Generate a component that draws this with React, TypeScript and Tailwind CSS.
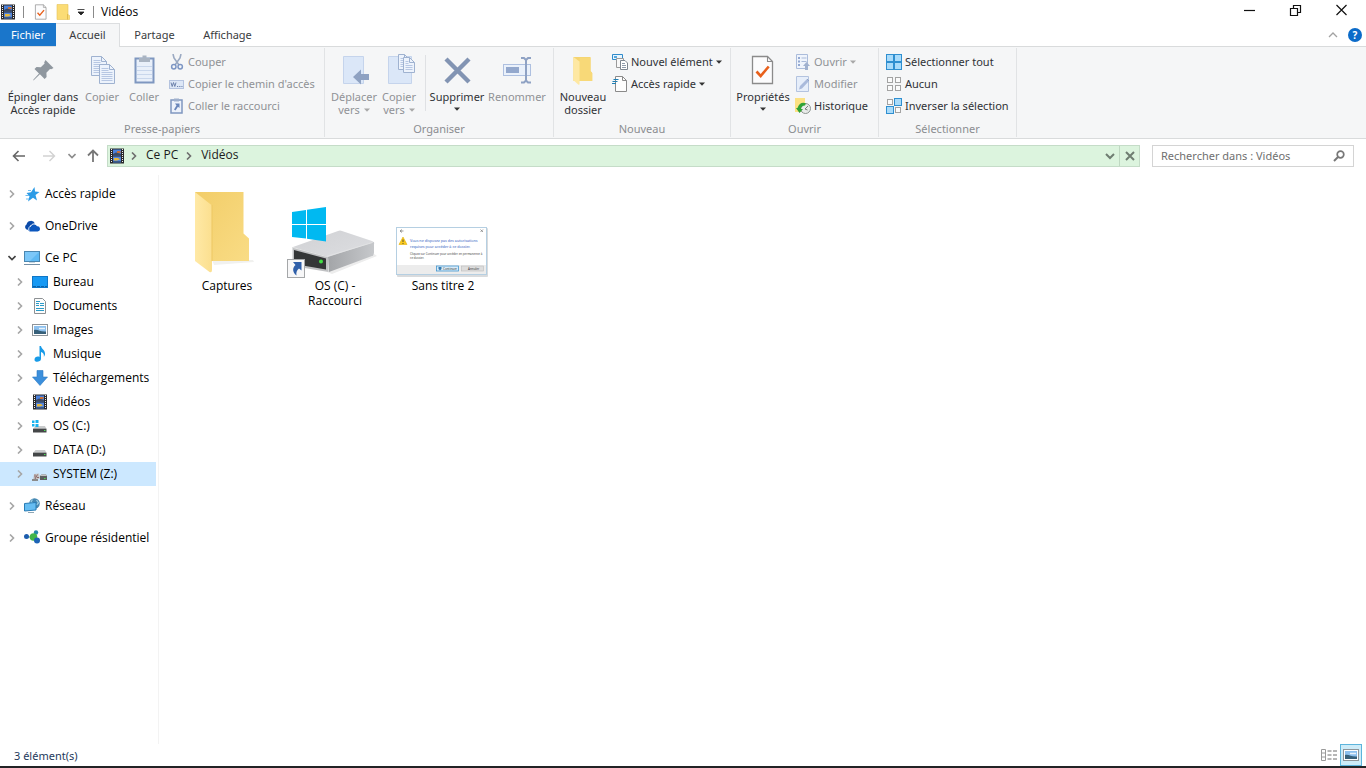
import React from "react";

type IconProps = { className?: string };

const Film = ({ className = "size-4" }: IconProps) => (
  <svg viewBox="0 0 16 16" className={className} aria-hidden="true">
    <rect x="1" y="0.5" width="14" height="15" fill="#2a2a2c" />
    <rect x="4" y="1.5" width="8" height="6" fill="#4b82dd" />
    <rect x="4" y="8.5" width="8" height="6" fill="#5587dc" />
    <path d="M4 6 7 4.5l5 1.5v1.5H4z" fill="#3c4a63" />
    <path d="M8 3h3.5v2H8z" fill="#c9713a" />
    <path d="M5 10h4l2 1.5-3 1H5z" fill="#e6b83c" />
    <path d="M4 13.2h8v1.3H4z" fill="#34507a" />
    <path d="M2.5 1v14M13.5 1v14" stroke="#f0f0f0" strokeWidth="1" strokeDasharray="1 1" />
  </svg>
);

const CheckDoc = ({ className }: IconProps) => (
  <svg viewBox="0 0 24 30" className={className} aria-hidden="true">
    <path d="M1.5 1.5h15l5 5v22h-20z" fill="#fcfcfd" stroke="#8b8b8b" strokeWidth="1.3" />
    <path d="M16.5 1.5v5h5" fill="none" stroke="#8b8b8b" strokeWidth="1.1" />
    <path d="m5.500 16.500 4.200 4.500 8-9.500" fill="none" stroke="#e8601c" strokeWidth="2.6" />
  </svg>
);

const Folder = ({ className }: IconProps) => (
  <svg viewBox="0 0 56 82" className={className} aria-hidden="true">
    <path d="M0 0h50v41l5 6v23H0z" fill="#f5d470" />
    <path d="M18 2h32v39l5 6v23H18z" fill="#f8d978" />
    <path d="M0 0l18 13v66q0 3-3 2L0 68z" fill="#fee8a2" />
  </svg>
);

const Pin = () => (
  <svg viewBox="0 0 24 24" className="mt-1 size-6" aria-hidden="true">
    <path d="M14.5 2 22.5 10l-2.300 1.300-1.200-.3-3.600 3.800.2 4.200-2 2-4.700-4.700L3 22l-1 .5.5-1L8 15.500 3.500 11l2-2 4.300.2 3.800-3.600-.4-1.200z" fill="#8f979f" />
  </svg>
);

const PageLines = ({ x, y, w = 15, h = 19 }: { x: number; y: number; w?: number; h?: number }) => (
  <g transform={`translate(${x} ${y})`}>
    <path d={`M0 0h${w - 5}l5 5v${h - 5}H0z`} fill="#edf3fc" stroke="#9fb2d0" />
    <path d={`M${w - 5} 0v5h5`} fill="none" stroke="#9fb2d0" />
    <path d={`M2 4h${w - 8}M2 6h${w - 8}M2 8h${w - 4}M2 10h${w - 4}M2 12h${w - 4}`} stroke="#b7c7e3" />
    {h > 16 && <path d={`M2 14h${w - 4}M2 16h${w - 4}`} stroke="#b7c7e3" />}
  </g>
);

const CopyIcon = () => (
  <svg viewBox="0 0 32 32" className="size-8" aria-hidden="true">
    <PageLines x={5.5} y={2.5} />
    <PageLines x={13.5} y={10.5} />
  </svg>
);

const PasteIcon = () => (
  <svg viewBox="0 0 32 32" className="size-8" aria-hidden="true">
    <rect x="7.5" y="4.5" width="18" height="24" fill="#e9f0fa" stroke="#7f97c0" strokeWidth="2" />
    <path d="M9 12.5h15M9 16.5h15M9 20.5h15M9 24.5h15" stroke="#c9d7ec" />
    <path d="M11 4h3.5V1.5h4V4H22v4H11z" fill="#a9b4c2" />
  </svg>
);

const Scissors = () => (
  <svg viewBox="0 0 16 16" className="size-4" aria-hidden="true">
    <path d="M4 0 5 4l5 7M12 0l-1 4-5 7" fill="none" stroke="#9aa9c2" strokeWidth="1.6" />
    <circle cx="4.8" cy="12.8" r="2.2" fill="none" stroke="#7d96c4" strokeWidth="1.5" />
    <circle cx="11.2" cy="12.8" r="2.2" fill="none" stroke="#7d96c4" strokeWidth="1.5" />
  </svg>
);

const PathIcon = () => (
  <svg viewBox="0 0 16 16" className="size-4" aria-hidden="true">
    <rect x="0.5" y="4.5" width="14" height="8" fill="#dde7f6" stroke="#b4c3df" />
    <path d="m2 6.5 1.200 4 1.300-4 1.300 4 1.200-4" fill="none" stroke="#6d82ac" />
    <path d="M8 10.5h5.5" stroke="#6d82ac" strokeDasharray="1.2 1" />
  </svg>
);

const PasteShortcut = () => (
  <svg viewBox="0 0 16 16" className="size-4" aria-hidden="true">
    <rect x="2" y="2" width="11" height="13" fill="#edf2fb" stroke="#7f97c0" strokeWidth="1.5" />
    <path d="M5 .5h5v3H5z" fill="#9fb0cc" />
    <path d="M6 5.5h4.5V10L9 8.700 6.500 12.500 5 11.500l2.500-4z" fill="#6a86ba" />
  </svg>
);

const MoveTo = () => (
  <svg viewBox="0 0 32 32" className="size-8" aria-hidden="true">
    <path d="M5.5 2.5h20v27h-20z" fill="#dbe7f8" stroke="#c5d4ec" />
    <path d="M15 23l8-7.5v4.5h8v6h-8v4.5z" fill="#8fa2c2" />
  </svg>
);

const CopyTo = () => (
  <svg viewBox="0 0 32 32" className="size-8" aria-hidden="true">
    <path d="M5.5 2.5h23v27h-23z" fill="#dbe7f8" stroke="#c5d4ec" />
    <PageLines x={15.5} y={0.5} w={11} h={15} />
    <PageLines x={20.5} y={3.5} w={11} h={15} />
  </svg>
);

const DeleteX = () => (
  <svg viewBox="0 0 32 32" className="size-8" aria-hidden="true">
    <path d="M5 5l23 23M28 5 5 28" stroke="#8294b3" strokeWidth="4.4" />
  </svg>
);

const Rename = () => (
  <svg viewBox="0 0 32 32" className="size-8" aria-hidden="true">
    <rect x="2.5" y="10.5" width="27" height="11" fill="#eaf1fb" stroke="#aec0e0" />
    <rect x="5" y="13" width="13" height="6" fill="#93a8cd" />
    <path d="M20 4h3l2 2 2-2h3M20 28.5h3l2-2 2 2h3M25 5.5V27" fill="none" stroke="#8fa2c4" strokeWidth="2" />
  </svg>
);

const NewItem = () => (
  <svg viewBox="0 0 16 16" className="size-4" aria-hidden="true">
    <path d="M.5.5h10v5H.5z" fill="#e8f4fd" stroke="#2e8bcb" />
    <path d="M2 2h3v2H2z" fill="#55a8dd" />
    <path d="M4.5 4.5h7v9h-7z" fill="#f8f8f8" stroke="#9a9a9a" />
    <path d="M8.5 6.5h4.5l2.5 2.5v6.5h-7z" fill="#fff" stroke="#7e8791" />
    <path d="M10 9.5h3M10 11.5h4M10 13.5h4" stroke="#8e9bab" />
  </svg>
);

const EasyAccess = () => (
  <svg viewBox="0 0 16 16" className="size-4" aria-hidden="true">
    <path d="M3.5.5h7l4 4v11h-11z" fill="#fdfdfd" stroke="#8a8a8a" />
    <path d="M10.5.5v4h4" fill="none" stroke="#8a8a8a" />
    <path d="M1.5 3.5h5M.5 5.5h5M0 7.5h4" stroke="#2080b5" strokeWidth="1.2" />
  </svg>
);

const OpenIcon = () => (
  <svg viewBox="0 0 16 16" className="size-4" aria-hidden="true">
    <path d="M1.5.5h11v14h-11z" fill="#eff4fc" stroke="#abbcdb" />
    <path d="M3 3h2v2H3zM3 6.5h2v2H3zM3 10h2v2H3z" fill="#93a9d2" />
    <path d="M6.5 4h5M6.5 7.5h5" stroke="#a9bad9" />
    <path d="m11.5 8 3.5 4h-2v4h-3v-4H8z" fill="#a0b1cf" />
  </svg>
);

const EditIcon = () => (
  <svg viewBox="0 0 16 16" className="size-4" aria-hidden="true">
    <path d="M1.5.5h12v15h-12z" fill="#e6eefa" stroke="#b3c3df" />
    <path d="M4 13.5 5 10l7-7 2 2-7 7.5z" fill="#a9badb" />
    <path d="M12 3l2 2" stroke="#90a3c7" />
  </svg>
);

const HistoryIcon = () => (
  <svg viewBox="0 0 16 16" className="size-4" aria-hidden="true">
    <path d="M0 0h10v7l2 1v6H0z" fill="#fbe183" />
    <circle cx="10.5" cy="10.5" r="5" fill="#e8ebe9" stroke="#8d9490" />
    <path d="M10 11l3-3M10 11l2.5 1" fill="none" stroke="#77807b" />
    <path d="M2.5 10C4 5 8 3.5 11 5.5L10 7.5C7.5 7.5 6.5 9 6 11h2l-3.5 4L1 10z" fill="#2fa336" />
  </svg>
);

const cells = [
  [0.5, 0.5],
  [8.5, 0.5],
  [0.5, 8.5],
  [8.5, 8.5],
];
const SelectAll = () => (
  <svg viewBox="0 0 16 16" className="size-4" aria-hidden="true">
    {cells.map(([x, y]) => (
      <rect key={`${x}-${y}`} x={x} y={y} width="7" height="7" fill="#a9dbfa" stroke="#2f8fd0" />
    ))}
  </svg>
);
const SelectSome = ({ inverse = false }: { inverse?: boolean }) => (
  <svg viewBox="0 0 16 16" className="size-4" aria-hidden="true">
    {cells.map(([x, y], i) =>
      inverse && (i === 1 || i === 2) ? (
        <rect key={i} x={x} y={y} width="7" height="7" fill="#a9dbfa" stroke="#2f8fd0" />
      ) : (
        <rect key={i} x={x + 1} y={y + 1} width="5" height="5" fill="#fbfbfb" stroke="#a3a3a3" />
      )
    )}
  </svg>
);

const Caret = ({ className = "text-[#333]" }: IconProps) => (
  <svg viewBox="0 0 6 4" className={`inline h-1 w-1.5 shrink-0 ${className}`} aria-hidden="true">
    <path d="M0 .5h6L3 3.8z" fill="currentColor" />
  </svg>
);

function Big({ icon, lines, width, disabled = false, caret }: { icon: React.ReactNode; lines: string[]; width: string; disabled?: boolean; caret?: "inline" | "below" }) {
  return (
    <button type="button" disabled={disabled} className={`flex shrink-0 flex-col items-center pt-[3px] text-center leading-[13px] ${width} ${disabled ? "text-[#909296]" : "text-[#303236]"}`}>
      <span className="flex h-9 items-start justify-center">{icon}</span>
      {lines.map((line, i) => (
        <span key={line} className="flex items-center gap-1 whitespace-nowrap">
          {line}
          {caret === "inline" && i === lines.length - 1 && <Caret className="text-[#a8a8a8]" />}
        </span>
      ))}
      {caret === "below" && (
        <span className="flex h-3 items-center">
          <Caret />
        </span>
      )}
    </button>
  );
}

function Small({ icon, label, disabled = false, caret = false }: { icon: React.ReactNode; label: string; disabled?: boolean; caret?: boolean }) {
  return (
    <button type="button" disabled={disabled} className={`flex h-[22px] items-center gap-[3px] whitespace-nowrap ${disabled ? "text-[#909296]" : "text-[#303236]"}`}>
      {icon}
      <span>{label}</span>
      {caret && <Caret className={disabled ? "text-[#a8a8a8]" : "text-[#333]"} />}
    </button>
  );
}

function Group({ label, width, children }: { label: string; width: string; children: React.ReactNode }) {
  return (
    <section aria-label={label} className={`my-px flex shrink-0 flex-col border-r border-[#e1e3e5] pt-[3px] ${width}`}>
      <div className="flex h-[70px] items-start">{children}</div>
      <div className="text-center leading-4 text-[#8b8d91]">{label}</div>
    </section>
  );
}

const Star = () => (
  <svg viewBox="0 0 16 16" className="size-4" aria-hidden="true">
    <path d="m10.5 1 .5 4.5 4.5.5-4 3 1.5 5.5-4-2.8L4 15.5l1.5-5.3L2.5 7l4.5-.8z" fill="#2b9be6" />
    <path d="M4 4.5h3M1.5 9.5H5M2 13h3" stroke="#6cbcf0" />
  </svg>
);
const Cloud = () => (
  <svg viewBox="0 0 16 16" className="size-4" aria-hidden="true">
    <path d="M3.5 12A3 3 0 0 1 2.5 6.5 4.5 4.5 0 0 1 11 5.5L7 7 4.5 10z" fill="#0b4aa8" />
    <path d="M6 13.5a2.5 2.5 0 0 1 .5-5A3.5 3.5 0 0 1 13 8.3a2.6 2.6 0 0 1 .7 5.2z" fill="#0b56bd" />
    <path d="M5 13C4 10 5.5 8.3 7 8c1-2.500 4-3 5.500-1" fill="none" stroke="#fff" strokeWidth=".8" />
  </svg>
);
const Monitor = () => (
  <svg viewBox="0 0 16 16" className="size-4" aria-hidden="true">
    <rect x=".5" y="1.5" width="15" height="10" fill="#5fb9f3" stroke="#4a86b0" />
    <path d="M1 2h14L6 11H1z" fill="#7cc7f8" />
    <path d="M5 12.5h6" stroke="#c5d5e0" />
    <path d="M0 14.5h16" stroke="#748fa6" />
  </svg>
);
const Desktop = () => (
  <svg viewBox="0 0 16 16" className="size-4" aria-hidden="true">
    <rect x=".5" y="2.5" width="15" height="11" fill="#1799f3" stroke="#0f76c6" />
    <path d="M1 12.5h14" stroke="#0b62a8" strokeDasharray="3 1" />
  </svg>
);
const DocIcon = () => (
  <svg viewBox="0 0 16 16" className="size-4" aria-hidden="true">
    <path d="M2.5.5h8l3 3v12h-11z" fill="#fcfcfc" stroke="#8d9194" />
    <path d="M4 3.5h4M4 5.5h3M8 5.5h4M4 7.5h3M8 7.5h4M4 10.5h8M4 12.5h8" stroke="#2a9bc8" strokeWidth="1.2" />
  </svg>
);
const Picture = () => (
  <svg viewBox="0 0 16 16" className="size-4" aria-hidden="true">
    <rect x=".5" y="2.5" width="15" height="11" fill="#fff" stroke="#8e9499" />
    <path d="M2 4h12v8H2z" fill="#8cc0ee" />
    <path d="M2 8c4-1 6 2 12 1.5V12H2z" fill="#376079" />
    <path d="M7 6.5h6" stroke="#e8f3fb" strokeWidth="1.5" />
  </svg>
);
const Note = () => (
  <svg viewBox="0 0 16 16" className="size-4" aria-hidden="true">
    <path d="M7.5 0h1.5c.3 3 4.5 4 4 8.500-.2 1-.7 1.800-1.200 2.500.5-3-.8-4.500-2.800-5v7c0 3-6.500 4-6.500.7C2.500 11 5.500 10 7.500 11z" fill="#189be8" />
  </svg>
);
const Download = () => (
  <svg viewBox="0 0 16 16" className="size-4" aria-hidden="true">
    <path d="M5 .5h6V7h4.5L8 15.5.5 7H5z" fill="#3b8fdc" stroke="#2b79c3" strokeWidth=".6" />
  </svg>
);
const Disk = ({ kind }: { kind: "os" | "data" | "system" }) => (
  <svg viewBox="0 0 16 16" className="size-4" aria-hidden="true">
    {kind === "system" ? (
      <>
        <path d="m2 8 5-.5 1 5-7 2z" fill="#c4c4c4" />
        <path d="M3 8.5v3M5.5 8.5 3 13M5 11.5h2" stroke="#8c6767" />
        <path d="m8 10 1.5-1.5h4.5L15 10v4H8z" fill="#5c5f60" />
        <path d="m8 10 1.5-1.5h4.5L15 10z" fill="#c4c4c4" />
        <path d="M0 13h6v2H0z" fill="#8b8b8b" />
      </>
    ) : (
      <>
        <path d="m1 11 2.5-3h9.5l1.5 3z" fill="#c9cbcc" />
        <path d="M1 10.7h13.5v3.8H1z" fill="#444748" />
      </>
    )}
    <path d="M12 12.5h1.5" stroke="#4be052" />
    {kind === "os" && <path d="M0 2.5h2.5V5H0zM3.5 2h3v3h-3zM0 6h2.5v2.5H0zM3.5 6h3v3h-3z" fill="#16b2ee" />}
  </svg>
);
const Network = () => (
  <svg viewBox="0 0 16 16" className="size-4" aria-hidden="true">
    <circle cx="10.5" cy="5.5" r="5.3" fill="#4688b2" />
    <path d="M8.5 1.5 7 4l2 1M12.5 2l2 3-2 2" fill="none" stroke="#9dcfe5" strokeWidth="1.2" />
    <path d="M.5 5.5 12 4.5v7.5L.5 13z" fill="#65bdf2" stroke="#287cb5" />
    <path d="M4 14.5h6" stroke="#8ea6b5" />
  </svg>
);
const HomeGroup = () => (
  <svg viewBox="0 0 16 16" className="size-4" aria-hidden="true">
    <path d="M3 7h7l2-5M9 8l4 4" stroke="#90c5bd" strokeWidth="1.5" fill="none" />
    <circle cx="2.5" cy="6.5" r="2.5" fill="#1c5cae" />
    <circle cx="12" cy="2.5" r="2.2" fill="#2388a9" />
    <circle cx="9.5" cy="7" r="3.8" fill="#42b649" />
    <circle cx="13" cy="10.5" r="3" fill="#1d64b5" />
  </svg>
);

const Chevron = ({ className = "" }: IconProps) => (
  <svg viewBox="0 0 8 8" className={`size-2 shrink-0 ${className}`} aria-hidden="true">
    <path d="M2 .5 5.5 4 2 7.5" fill="none" stroke="currentColor" strokeWidth="1.6" />
  </svg>
);

type Node = { label: string; icon: React.ReactNode; child?: boolean; open?: boolean; spaced?: boolean; selected?: boolean };
const nodes: Node[] = [
  { label: "Accès rapide", icon: <Star /> },
  { label: "OneDrive", icon: <Cloud />, spaced: true },
  { label: "Ce PC", icon: <Monitor />, spaced: true, open: true },
  { label: "Bureau", icon: <Desktop />, child: true },
  { label: "Documents", icon: <DocIcon />, child: true },
  { label: "Images", icon: <Picture />, child: true },
  { label: "Musique", icon: <Note />, child: true },
  { label: "Téléchargements", icon: <Download />, child: true },
  { label: "Vidéos", icon: <Film />, child: true },
  { label: "OS (C:)", icon: <Disk kind="os" />, child: true },
  { label: "DATA (D:)", icon: <Disk kind="data" />, child: true },
  { label: "SYSTEM (Z:)", icon: <Disk kind="system" />, child: true, selected: true },
  { label: "Réseau", icon: <Network />, spaced: true },
  { label: "Groupe résidentiel", icon: <HomeGroup />, spaced: true },
];

const FolderLarge = () => (
  <svg viewBox="0 0 96 96" className="size-24" aria-hidden="true">
    <defs>
      <linearGradient id="back" x1="0" x2="1" y1="0" y2="1">
        <stop offset="0" stopColor="#f2cd68" />
        <stop offset="1" stopColor="#f9dc85" />
      </linearGradient>
      <linearGradient id="front" x1="0" x2="1">
        <stop offset="0" stopColor="#ffe9a6" />
        <stop offset="1" stopColor="#fbdf8f" />
      </linearGradient>
    </defs>
    <path d="M33 78h41l1 2-40 3z" fill="#f1f1ef" />
    <path d="M16 10h48.5v41.5l5.5 5V79H16z" fill="url(#back)" />
    <path d="m16 10 17 13.5V88q0 3-2.500 2L16 79z" fill="url(#front)" />
    <path d="M33 23v56" stroke="#edc762" />
  </svg>
);

const DriveLarge = () => (
  <svg viewBox="0 0 96 96" className="size-24" aria-hidden="true">
    <defs>
      <linearGradient id="top" x1="0" x2="1" y1="0" y2="1">
        <stop offset="0" stopColor="#d0d1d4" />
        <stop offset="1" stopColor="#dedfe2" />
      </linearGradient>
      <linearGradient id="side" x1="0" x2="1">
        <stop offset="0" stopColor="#a3a5a8" />
        <stop offset="1" stopColor="#c6c8cb" />
      </linearGradient>
    </defs>
    <path d="m40 90 47-18 3 2-45 18z" fill="#ededed" />
    <path d="M6 65 51 49q2-1 4 0l30 10q3 1 2 3L42 78z" fill="url(#top)" />
    <path d="m41 75 46-15v11q0 2-2 3L42 90z" fill="url(#side)" />
    <path d="m5.5 65 34 9q2 1 2 4v12L5.5 84z" fill="#c0c1c3" />
    <path d="m7 68 32 8.500v11L7 82z" fill="#343637" />
    <path d="m6 65.5 33.500 9 46-14" fill="none" stroke="#e2e3e4" />
    <circle cx="34" cy="79.5" r="2" fill="#42e044" />
    <path d="m5 30 14-2v14H5zM20 27.8 39 25v17H20zM5 43h14v13.5L5 55zM20 43h19v16.5l-19-2.8z" fill="#00b9f1" />
    <rect x=".5" y="77.5" width="17" height="18" fill="#f7f7f8" stroke="#a5a7a9" />
    <path d="M6 80h8.5v8.5L12 86.5c-2.500 2-3 4-2.500 7C5 90 5.500 85.500 8.500 83z" fill="#2f5fa9" />
  </svg>
);

const DialogThumb = () => (
  <svg viewBox="0 0 96 96" className="size-24 font-['Noto_Sans',sans-serif]" aria-hidden="true">
    <rect x="2" y="46" width="91" height="49" rx="1" fill="#d9dbdd" />
    <rect x="1.5" y="45.5" width="90" height="47" fill="#fff" stroke="#b5cfe2" />
    <path d="M2 83h89v9H2z" fill="#ececec" />
    <path d="m5 49 2-1.500M5 49l2 1.500M5 49h3.500M85.500 47.500l2.500 2.500m0-2.500L85.500 50" stroke="#777" strokeWidth=".7" />
    <path d="m8 55 4 7.500H4z" fill="#f9c91d" stroke="#e4b10a" strokeWidth=".6" />
    <path d="M8 57.5V60M8 61v1" stroke="#333" strokeWidth=".8" />
    <g fontSize="3.7" fill="#2f5cc0">
      <text x="15" y="60">Vous ne disposez pas des autorisations</text>
      <text x="15" y="65.5">requises pour accéder à ce dossier.</text>
    </g>
    <g fontSize="2.9" fill="#444">
      <text x="15" y="73">Cliquez sur Continuer pour accéder en permanence à</text>
      <text x="15" y="77">ce dossier.</text>
    </g>
    <rect x="41.5" y="84" width="22" height="5" fill="#d9ebf8" stroke="#4296cf" strokeWidth=".8" />
    <rect x="66.5" y="84" width="22" height="5" fill="#ddd" stroke="#bbb" strokeWidth=".6" />
    <path d="M43.5 85h3v2l-1.500 1.500-1.500-1.500z" fill="#367cb2" />
    <g fontSize="3" fill="#333">
      <text x="48" y="87.6">Continuer</text>
      <text x="73" y="87.6">Annuler</text>
    </g>
  </svg>
);

const files = [
  { name: ["Captures"], icon: <FolderLarge /> },
  { name: ["OS (C) -", "Raccourci"], icon: <DriveLarge /> },
  { name: ["Sans titre 2"], icon: <DialogThumb /> },
];

export default function App() {
  return (
    <div className="flex h-screen flex-col overflow-hidden bg-white font-['Noto_Sans',sans-serif] text-[11px] text-[#1b1b1b]">
      <header className="flex h-[23px] shrink-0 items-center pr-0.5">
        <Film />
        <span className="ml-[7px] h-3 w-px bg-[#8a8a8a]" />
        <button type="button" aria-label="Propriétés" className="ml-2.5 w-4">
          <CheckDoc className="h-4 w-[14px]" />
        </button>
        <button type="button" aria-label="Nouveau dossier" className="ml-[5px]">
          <svg viewBox="0 0 16 16" className="size-4" aria-hidden="true">
            <path d="M2 .5h11v10l1.5 1v4H2z" fill="#fbdc75" stroke="#e6c257" strokeWidth=".6" />
            <path d="M12.5 10v5.5" stroke="#e0bb4e" />
          </svg>
        </button>
        <button type="button" aria-label="Personnaliser la barre d’outils" className="ml-1.5">
          <svg viewBox="0 0 8 8" className="size-2" aria-hidden="true">
            <path d="M.5 1.5h7M1 4h6L4 7z" fill="#222" stroke="#222" strokeWidth=".8" />
          </svg>
        </button>
        <span className="ml-2 h-3 w-px bg-[#8a8a8a]" />
        <h1 className="ml-[7px] grow font-['Open_Sans',sans-serif] text-xs text-black">Vidéos</h1>
        <div className="flex h-full items-start">
          {[
            ["Réduire", "M1 6.5h11"],
            ["Restaurer", "M4.5 4V1.5h7v7H9M1.5 4.5h7v7h-7z"],
            ["Fermer", "m1.5 1 10 10M11.5 1l-10 10"],
          ].map(([name, d]) => (
            <button key={name} type="button" aria-label={name} className="flex h-[21px] w-[46px] items-center justify-center">
              <svg viewBox="0 0 13 13" className="size-[13px]" aria-hidden="true">
                <path d={d} fill="none" stroke="#111" strokeWidth="1.2" />
              </svg>
            </button>
          ))}
        </div>
      </header>

      <nav aria-label="Ruban" className="flex h-6 shrink-0 border-b border-[#d9dbdc] text-[#3a3c40]">
        <button type="button" className="w-14 bg-[#1a76cb] pt-px text-white">Fichier</button>
        <button type="button" className="-mb-px w-16 border-r border-t border-[#dcdee0] bg-[#f5f6f7]">Accueil</button>
        <button type="button" className="w-[69px] pt-px">Partage</button>
        <button type="button" className="w-[77px] pt-px">Affichage</button>
        <span className="grow" />
        <button type="button" aria-label="Réduire le ruban" className="mr-2.5">
          <svg viewBox="0 0 10 6" className="h-1.5 w-2.5" aria-hidden="true">
            <path d="m1 5 4-4 4 4" fill="none" stroke="#a2a2a2" strokeWidth="1.3" />
          </svg>
        </button>
        <button type="button" aria-label="Aide" className="mr-1 size-[14px] self-center rounded-full bg-[#0b6bc9] text-[10px] font-bold leading-[14px] text-white">?</button>
      </nav>

      <div className="flex h-[92px] shrink-0 border-b border-[#d9dbdc] bg-[#f5f6f7]">
        <Group label="Presse-papiers" width="w-[325px]">
          <Big icon={<Pin />} lines={["Épingler dans", "Accès rapide"]} width="ml-1 w-[78px]" />
          <Big icon={<CopyIcon />} lines={["Copier"]} width="w-10" disabled />
          <Big icon={<PasteIcon />} lines={["Coller"]} width="w-11" disabled />
          <div className="ml-[3px] flex flex-col">
            <Small icon={<Scissors />} label="Couper" disabled />
            <Small icon={<PathIcon />} label="Copier le chemin d'accès" disabled />
            <Small icon={<PasteShortcut />} label="Coller le raccourci" disabled />
          </div>
        </Group>
        <Group label="Organiser" width="w-[229px]">
          <Big icon={<MoveTo />} lines={["Déplacer", "vers"]} width="ml-[5px] w-12" disabled caret="inline" />
          <Big icon={<CopyTo />} lines={["Copier", "vers"]} width="w-[42px]" disabled caret="inline" />
          <span className="ml-[5px] mt-1 h-14 w-px bg-[#dfe1e4]" />
          <Big icon={<DeleteX />} lines={["Supprimer"]} width="ml-px w-[60px]" caret="below" />
          <Big icon={<Rename />} lines={["Renommer"]} width="w-[60px]" disabled />
        </Group>
        <Group label="Nouveau" width="w-[177px]">
          <Big icon={<Folder className="mt-[3px] h-7 w-5" />} lines={["Nouveau", "dossier"]} width="ml-1 w-[50px]" />
          <div className="ml-1 flex flex-col">
            <Small icon={<NewItem />} label="Nouvel élément" caret />
            <Small icon={<EasyAccess />} label="Accès rapide" caret />
          </div>
        </Group>
        <Group label="Ouvrir" width="w-[148px]">
          <Big icon={<CheckDoc className="mt-px h-[30px] w-6" />} lines={["Propriétés"]} width="ml-[3px] w-[58px]" caret="below" />
          <div className="ml-[3px] flex flex-col">
            <Small icon={<OpenIcon />} label="Ouvrir" disabled caret />
            <Small icon={<EditIcon />} label="Modifier" disabled />
            <Small icon={<HistoryIcon />} label="Historique" />
          </div>
        </Group>
        <Group label="Sélectionner" width="w-[138px]">
          <div className="ml-[7px] flex flex-col">
            <Small icon={<SelectAll />} label="Sélectionner tout" />
            <Small icon={<SelectSome />} label="Aucun" />
            <Small icon={<SelectSome inverse />} label="Inverser la sélection" />
          </div>
        </Group>
      </div>

      <div className="mt-1.5 flex h-[22px] shrink-0 items-stretch px-3">
        <div className="flex w-[95px] shrink-0 items-center">
          <button type="button" aria-label="Précédent">
            <svg viewBox="0 0 14 14" className="size-[14px]" aria-hidden="true">
              <path d="M13 7H1.5M6.5 2l-5 5 5 5" fill="none" stroke="#666" strokeWidth="1.6" />
            </svg>
          </button>
          <button type="button" aria-label="Suivant" className="ml-4" disabled>
            <svg viewBox="0 0 14 14" className="size-[14px]" aria-hidden="true">
              <path d="M1 7h11.5M7.5 2l5 5-5 5" fill="none" stroke="#d2d2d2" strokeWidth="1.4" />
            </svg>
          </button>
          <button type="button" aria-label="Emplacements récents" className="ml-3">
            <Chevron className="rotate-90 text-[#8d8d8d]" />
          </button>
          <button type="button" aria-label="Dossier parent" className="ml-2.5">
            <svg viewBox="0 0 14 14" className="size-[14px]" aria-hidden="true">
              <path d="M7 13V1.5M2 6.5l5-5 5 5" fill="none" stroke="#777" strokeWidth="1.8" />
            </svg>
          </button>
        </div>
        <div className="flex min-w-0 grow items-center border border-[#c5dcc8] bg-[#dcf4de] font-['Open_Sans',sans-serif] text-xs text-[#1b1b1b]">
          <span className="ml-px"><Film /></span>
          <Chevron className="ml-[5px] text-[#6d6d6d]" />
          <a href="#ce-pc" className="ml-2 pb-0.5">Ce PC</a>
          <Chevron className="ml-[7px] text-[#6d6d6d]" />
          <a href="#videos" className="ml-2 pb-0.5">Vidéos</a>
          <span className="grow" />
          <button type="button" aria-label="Emplacements précédents" className="mr-1">
            <svg viewBox="0 0 10 8" className="h-2 w-2.5" aria-hidden="true">
              <path d="m1 2 4 4 4-4" fill="none" stroke="#6f7d71" strokeWidth="2" />
            </svg>
          </button>
          <button type="button" aria-label="Arrêter le chargement" className="flex h-full w-5 items-center justify-center border-l border-[#bfd8c2]">
            <svg viewBox="0 0 10 10" className="size-2.5" aria-hidden="true">
              <path d="m1 1 8 8M9 1 1 9" stroke="#6f7d71" strokeWidth="2" />
            </svg>
          </button>
        </div>
        <label className="ml-3 flex w-[202px] shrink-0 items-center border border-[#d4d4d4] px-2">
          <input type="text" aria-label="Rechercher dans : Vidéos" placeholder="Rechercher dans : Vidéos" className="min-w-0 grow text-[11px] outline-none placeholder:text-[#6f6f6f]" />
          <svg viewBox="0 0 12 12" className="size-3" aria-hidden="true">
            <circle cx="7.5" cy="4.5" r="3.3" fill="none" stroke="#777" strokeWidth="1.7" />
            <path d="M5 7 1 11" stroke="#777" strokeWidth="2" />
          </svg>
        </label>
      </div>

      <main className="mt-2 flex min-h-0 grow font-['Open_Sans',sans-serif] text-xs text-black">
        <nav aria-label="Navigation" className="w-[159px] shrink-0 overflow-hidden border-r border-[#f3f3f3] pr-0.5 pt-[7px]">
          <ul>
            {nodes.map((n) => (
              <li key={n.label} className={n.spaced ? "mt-2" : ""}>
                <a href="#dossier" className={`flex h-6 items-center whitespace-nowrap ${n.child ? "pl-4" : "pl-2"} ${n.selected ? "bg-[#cce8ff]" : ""}`}>
                  <Chevron className={n.open ? "rotate-90 text-[#404040]" : "text-[#a6a6a6]"} />
                  <span className="ml-2">{n.icon}</span>
                  <span className="ml-[5px]">{n.label}</span>
                </a>
              </li>
            ))}
          </ul>
        </nav>
        <ul className="flex grow items-start pl-3.5 pt-[7px]">
          {files.map((f) => (
            <li key={f.name[0]} className="flex w-[108px] flex-col items-center">
              {f.icon}
              {f.name.map((line) => (
                <span key={line} className="leading-[15px]">{line}</span>
              ))}
            </li>
          ))}
        </ul>
      </main>

      <footer className="flex h-6 shrink-0 items-stretch border-b-2 border-[#232325] pr-1">
        <p className="grow self-center pl-3.5 pt-0.5 text-[#1e395b]">3 élément(s)</p>
        <button type="button" aria-label="Détails" className="mr-[3px]">
          <svg viewBox="0 0 16 12" className="h-3 w-4" aria-hidden="true">
            <path d="M.5.5h4v11h-4zM.5 4h4M.5 8h4" fill="none" stroke="#9a9a9a" />
            <path d="M6.5 2h4M12 2h4M6.5 6h4M12 6h4M6.5 10h4M12 10h4" stroke="#6f6f6f" />
          </svg>
        </button>
        <button type="button" aria-label="Grandes icônes" className="flex w-[22px] items-center justify-center border border-[#5cb4dc] bg-[#cdebf8]">
          <Picture />
        </button>
      </footer>
    </div>
  );
}
